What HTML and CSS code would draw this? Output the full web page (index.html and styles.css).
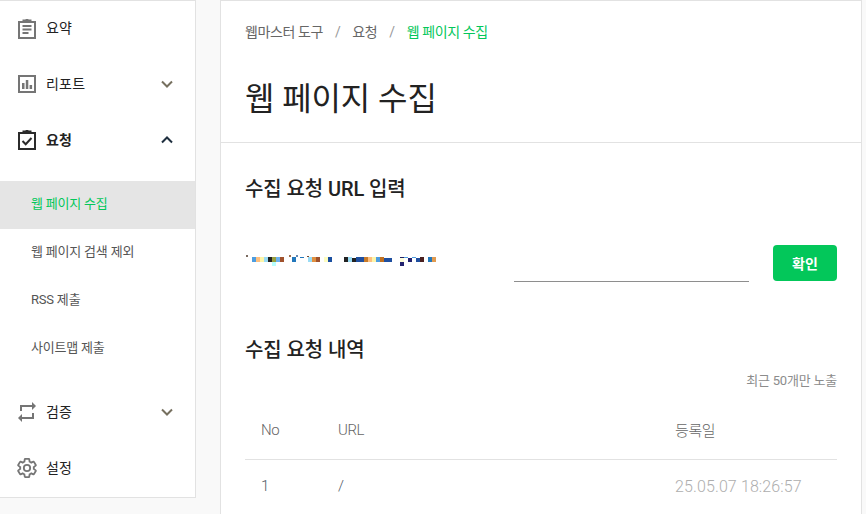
FILE: index.html
```html
<!DOCTYPE html>
<html lang="ko">
<head>
<meta charset="utf-8">
<title>웹 페이지 수집</title>
<link rel="stylesheet" href="styles.css">
</head>
<body>
<div class="layout">
  <nav class="sidebar">
    <a class="nav-item">
      <svg class="nav-icon" viewBox="0 0 20 20"><path d="M2 3h16v16H2z M6.500 3V1.500h2L10 0.500l1.500 1h2V3" fill="none" stroke="#757575" stroke-width="2"/><path d="M5.500 7h9M5.500 10.500h9M5.500 14h6" stroke="#757575" stroke-width="1.800" fill="none"/></svg>
      <span class="nav-label">요약</span>
    </a>
    <a class="nav-item">
      <svg class="nav-icon" viewBox="0 0 20 20"><path d="M2 2h16v16H2z" fill="none" stroke="#757575" stroke-width="2"/><path d="M5 9h2.500v6H5zM8.800 6h2.500v9H8.800zM12.600 11h2.500v4h-2.500z" fill="#757575"/></svg>
      <span class="nav-label">리포트</span>
      <svg class="chevron" viewBox="0 0 14 14"><path d="M2 4.500l5 5 5-5" fill="none" stroke="#76705f" stroke-width="2"/></svg>
    </a>
    <a class="nav-item is-open">
      <svg class="nav-icon" viewBox="0 0 20 20"><path d="M2 3h16v16H2z M6.500 3V1.500h2L10 0.500l1.500 1h2V3" fill="none" stroke="#2b2b2b" stroke-width="2"/><path d="M5.500 11l3.200 3.200L14.500 8" stroke="#2b2b2b" stroke-width="2" fill="none"/></svg>
      <span class="nav-label">요청</span>
      <svg class="chevron" viewBox="0 0 14 14"><path d="M2 9.500l5-5 5 5" fill="none" stroke="#1f2f3f" stroke-width="2"/></svg>
    </a>
    <ul class="subnav">
      <li class="subnav-item is-active">웹 페이지 수집</li>
      <li class="subnav-item">웹 페이지 검색 제외</li>
      <li class="subnav-item">RSS 제출</li>
      <li class="subnav-item">사이트맵 제출</li>
    </ul>
    <a class="nav-item">
      <svg class="nav-icon" viewBox="2 2 20 20"><path d="M7 7h10v3l4-4-4-4v3H5v6h2V7zm10 10H7v-3l-4 4 4 4v-3h12v-6h-2v4z" fill="#757575"/></svg>
      <span class="nav-label">검증</span>
      <svg class="chevron" viewBox="0 0 14 14"><path d="M2 4.500l5 5 5-5" fill="none" stroke="#76705f" stroke-width="2"/></svg>
    </a>
    <a class="nav-item">
      <svg class="nav-icon" viewBox="1 1 22 22"><path d="M19.430 12.980c.04-.32.07-.64.07-.98s-.03-.66-.07-.98l2.110-1.650c.19-.15.24-.42.12-.64l-2-3.460c-.12-.22-.39-.3-.61-.22l-2.490 1c-.52-.4-1.080-.73-1.690-.98l-.38-2.650C14.460 2.180 14.250 2 14 2h-4c-.25 0-.46.18-.49.42l-.38 2.650c-.61.25-1.170.59-1.690.98l-2.490-1c-.23-.09-.49 0-.61.22l-2 3.460c-.13.22-.07.49.12.64l2.110 1.650c-.04.32-.07.65-.07.98s.03.66.07.98l-2.110 1.650c-.19.15-.24.42-.12.64l2 3.460c.12.22.39.3.61.22l2.490-1c.52.4 1.080.73 1.690.98l.38 2.650c.03.24.24.42.49.42h4c.25 0 .46-.18.49-.42l.38-2.650c.61-.25 1.170-.59 1.690-.98l2.490 1c.23.09.49 0 .61-.22l2-3.460c.12-.22.07-.49-.12-.64l-2.110-1.650z" fill="none" stroke="#757575" stroke-width="2"/><circle cx="12" cy="12" r="3.500" fill="none" stroke="#757575" stroke-width="2"/></svg>
      <span class="nav-label">설정</span>
    </a>
  </nav>
  <main class="content">
    <header class="page-head">
      <div class="breadcrumb">
        <span>웹마스터 도구</span><span class="sep">/</span><span>요청</span><span class="sep">/</span><span class="current">웹 페이지 수집</span>
      </div>
      <h1 class="page-title">웹 페이지 수집</h1>
    </header>
    <section class="page-body">
      <h2 class="section-title">수집 요청 URL 입력</h2>
      <div class="request-row">
        <svg class="masked" width="195" height="26" viewBox="0 5 195 26">
          <rect x="1" y="15" width="2" height="2" fill="#7a6a60"/>
          <rect x="7" y="17" width="4" height="5" fill="#4d9de0"/><rect x="11" y="17" width="4" height="5" fill="#fdbf7f"/><rect x="15" y="17" width="4" height="5" fill="#fdf5a8"/><rect x="19" y="17" width="4" height="5" fill="#9adcf5"/><rect x="23" y="17" width="4" height="5" fill="#222222"/><rect x="27" y="17" width="4" height="5" fill="#9aa040"/><rect x="31" y="17" width="4" height="5" fill="#6ab0ee"/><rect x="35" y="17" width="4" height="5" fill="#a0522d"/><rect x="27" y="22" width="4" height="4" fill="#b8ffff"/>
          <rect x="44" y="15" width="2" height="2" fill="#a07050"/><rect x="47" y="17" width="4" height="5" fill="#2277bb"/><rect x="51" y="15" width="2" height="2" fill="#6a8ab0"/><rect x="55" y="17" width="4" height="1" fill="#2277bb"/><rect x="62" y="16" width="2" height="1" fill="#7a4a30"/><rect x="63" y="17" width="4" height="5" fill="#9adcf5"/><rect x="67" y="17" width="4" height="5" fill="#e09040"/><rect x="71" y="17" width="4" height="5" fill="#a0522d"/><rect x="79" y="17" width="4" height="5" fill="#fdfdc0"/><rect x="83" y="17" width="4" height="5" fill="#1a4fa0"/>
          <rect x="99" y="17" width="4" height="5" fill="#222222"/><rect x="103" y="17" width="4" height="5" fill="#9adcf5"/><rect x="107" y="18" width="4" height="4" fill="#222222"/><rect x="111" y="17" width="8" height="5" fill="#1f4f9f"/><rect x="119" y="17" width="4" height="5" fill="#c87b2a"/><rect x="123" y="17" width="4" height="5" fill="#fdbf7f"/><rect x="127" y="17" width="4" height="5" fill="#fdf5a8"/><rect x="131" y="17" width="4" height="5" fill="#4d9de0"/><rect x="135" y="17" width="4" height="5" fill="#c07020"/><rect x="139" y="18" width="8" height="4" fill="#1f4f9f"/>
          <rect x="155" y="17" width="4" height="1" fill="#222266"/><rect x="159" y="17" width="4" height="1" fill="#4d9de0"/><rect x="155" y="22" width="4" height="4" fill="#22226f"/><rect x="155" y="18" width="4" height="4" fill="#fdfdd8"/><rect x="163" y="18" width="4" height="4" fill="#22226f"/><rect x="167" y="17" width="4" height="1" fill="#4d9de0"/><rect x="171" y="18" width="4" height="4" fill="#1f4f9f"/><rect x="175" y="17" width="4" height="5" fill="#4a2020"/><rect x="183" y="17" width="4" height="5" fill="#2277bb"/><rect x="187" y="17" width="4" height="5" fill="#e09a50"/>
        </svg>
        <div class="request-input"></div>
        <button class="confirm-btn" type="button">확인</button>
      </div>
      <h2 class="section-title history-title">수집 요청 내역</h2>
      <p class="caption">최근 50개만 노출</p>
      <div class="table">
        <div class="table-row table-head"><span>No</span><span>URL</span><span>등록일</span></div>
        <div class="table-row"><span class="cell-no">1</span><span class="cell-url">/</span><span class="cell-date">25.05.07 18:26:57</span></div>
      </div>
    </section>
  </main>
</div>
</body>
</html>
```

FILE: styles.css
```css
* { box-sizing: border-box; }
html, body { margin: 0; height: 100%; overflow: hidden; }
body {
  background: #f9f9f9;
  font-family: Roboto, "Noto Sans CJK KR", sans-serif;
  color: #222;
}
.layout { display: flex; align-items: flex-start; height: 514px; overflow: hidden; }
.sidebar {
  width: 196px;
  flex: none;
  background: #fff;
  border: 1px solid #e2e2e2;
  border-left: 0;
  padding-bottom: 1px;
}
.nav-item {
  display: flex;
  align-items: center;
  height: 56px;
  padding-left: 17px;
  padding-right: 21px;
}
.nav-item:first-child { height: 55px; }
.nav-icon { width: 20px; height: 20px; flex: none; }
.nav-label { margin-left: 9px; font-size: 14px; letter-spacing: .2px; line-height: 20px; flex: 1; margin-top: -1px; }
.chevron { width: 14px; height: 14px; flex: none; }
.is-open .nav-label { font-weight: 700; }
.subnav { list-style: none; margin: 13px 0 11px; padding: 0; }
.subnav-item {
  height: 48px;
  line-height: 46px;
  padding-left: 31px;
  font-size: 13px;
  letter-spacing: -.2px;
  color: #555;
}
.subnav-item.is-active { background: #e5e5e5; color: #03c75a; }
.content {
  width: 642px;
  margin-left: 24px;
  flex: none;
  background: #fff;
  border-left: 1px solid #e2e2e2;
  border-right: 1px solid #e2e2e2;
  border-top: 1px solid #e2e2e2;
  height: 514px;
}
.page-head { height: 142px; border-bottom: 1px solid #e2e2e2; padding: 20px 24px 0; }
.breadcrumb { display: flex; font-size: 14px; letter-spacing: -.4px; line-height: 22px; color: #666; }
.sep { margin: 0 12px; color: #999; }
.current { color: #03c75a; }
.page-title { margin: 33px 0 0; font-size: 32px; letter-spacing: -.1px; line-height: 46px; font-weight: 400; color: #222; }
.page-body { padding: 32px 24px 0; }
.section-title { margin: 0; font-size: 20px; letter-spacing: -.1px; line-height: 28px; font-weight: 500; color: #222; }
.request-row { display: flex; align-items: flex-start; margin-top: 42px; height: 36px; }
.masked { display: block; flex: none; }
.request-input { width: 235px; height: 37px; margin-left: 74px; border-bottom: 1px solid #8e8e8e; }
.confirm-btn {
  width: 64px;
  height: 36px;
  margin-left: 24px;
  border: 0;
  border-radius: 4px;
  background: #03c75a;
  color: #fff;
  font: 700 14px Roboto, "Noto Sans CJK KR", sans-serif;
}
.history-title { margin-top: 55px; }
.caption { margin: 8px 0 0; text-align: right; font-size: 13px; letter-spacing: -.2px; line-height: 18px; color: #8c8c8c; }
.table { margin-top: 12px; }
.table-row {
  display: grid;
  grid-template-columns: 77px 337px 1fr;
  align-items: center;
  height: 52px;
  padding-left: 16px;
  font-size: 15px;
  font-weight: 300;
  letter-spacing: -.4px;
  color: #666;
}
.table-head { height: 58px; padding-bottom: 2px; border-bottom: 1px solid #e2e2e2; }
.cell-no, .cell-url { color: #4f5b66; }
.cell-date { color: #aeaeae; font-size: 16px; letter-spacing: .12px; }
```
